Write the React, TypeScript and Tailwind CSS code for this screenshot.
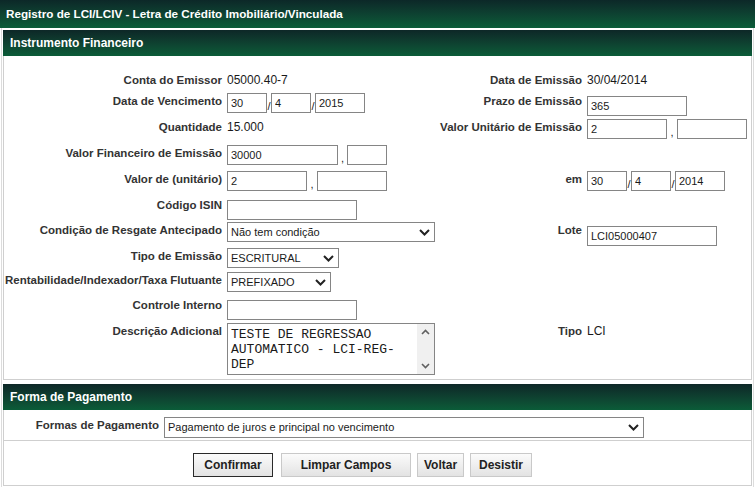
import clsx from 'clsx';

const Label = ({ children }: { children?: React.ReactNode }) => (
  <div className="whitespace-nowrap text-right text-[11.5px] font-bold leading-[16px] text-[#333]">
    {children}
  </div>
);

const Text = ({ children }: { children: React.ReactNode }) => (
  <div className="text-[12px] leading-[16px] text-[#1a1a1a]">{children}</div>
);

const Field = ({ className, value }: { className: string; value?: string }) => (
  <input
    readOnly
    defaultValue={value}
    className={clsx(
      'h-[20px] shrink-0 border border-[#858585] bg-white pl-[3px] text-[11px] text-[#1a1a1a] outline-none',
      className
    )}
  />
);

const Sep = ({ char, className }: { char: string; className: string }) => (
  <span className={clsx('flex h-[20px] shrink-0 items-end justify-center pb-[1px] text-[11px] leading-none text-[#222]', className)}>
    {char}
  </span>
);

const DateFields = ({ d, m, y }: { d: string; m: string; y: string }) => (
  <div className="flex">
    <Field className="w-[40px]" value={d} />
    <Sep char="/" className="w-[4px]" />
    <Field className="w-[40px]" value={m} />
    <Sep char="/" className="w-[4px]" />
    <Field className="w-[50px]" value={y} />
  </div>
);

const Chevron = () => (
  <svg width="11" height="7" viewBox="0 0 11 7" className="shrink-0">
    <polyline points="1,1 5.5,5.5 10,1" fill="none" stroke="#222" strokeWidth="2" />
  </svg>
);

const Select = ({ className, value }: { className: string; value: string }) => (
  <div
    className={clsx(
      'flex h-[20px] shrink-0 items-center justify-between border border-[#858585] bg-white pl-[3px] pr-[4px] text-[11px] text-[#1a1a1a]',
      className
    )}
  >
    <span className="whitespace-nowrap">{value}</span>
    <Chevron />
  </div>
);

const SectionHeader = ({ title }: { title: string }) => (
  <div className="h-[26px] bg-linear-to-b from-[#0d2727] to-[#0b5c38] pl-[7px] text-[12px] font-bold leading-[26px] text-white">
    {title}
  </div>
);

const Button = ({ label, className }: { label: string; className: string }) => (
  <div
    className={clsx(
      'flex h-[24px] items-center justify-center border bg-linear-to-b from-[#fbfbfb] to-[#e3e3e3] text-[12px] font-bold text-[#222]',
      className
    )}
  >
    {label}
  </div>
);

export default function App() {
  return (
    <div className="h-[487px] w-[755px] overflow-hidden bg-white font-['Liberation_Sans',Arial,sans-serif]">
      <div className="h-[28px] bg-linear-to-b from-[#0c2828] to-[#0b5d39] pl-[6px] text-[11.7px] font-bold leading-[28px] text-white">
        Registro de LCI/LCIV - Letra de Crédito Imobiliário/Vinculada
      </div>

      <div className="mx-[1px] h-[459px] border-x border-[#dcdcdc] px-[1px] pt-[2px]">
        <SectionHeader title="Instrumento Financeiro" />

        <div className="grid grid-cols-[218px_208px_142px_1fr] grid-rows-[21px_26px_26px_26px_26px_25px_26px_24px_25px_26px_52px] gap-x-[5px] border-x border-b border-[#cfcfcf] pb-[4px] pt-[16px]">
          <Label>Conta do Emissor</Label>
          <Text>05000.40-7</Text>
          <Label>Data de Emissão</Label>
          <Text>30/04/2014</Text>

          <Label>Data de Vencimento</Label>
          <DateFields d="30" m="4" y="2015" />
          <Label>Prazo de Emissão</Label>
          <div>
            <Field className="w-[100px]" value="365" />
          </div>

          <Label>Quantidade</Label>
          <Text>15.000</Text>
          <Label>Valor Unitário de Emissão</Label>
          <div className="flex">
            <Field className="w-[80px]" value="2" />
            <Sep char="," className="w-[10px]" />
            <Field className="w-[70px]" />
          </div>

          <Label>Valor Financeiro de Emissão</Label>
          <div className="flex">
            <Field className="w-[111px]" value="30000" />
            <Sep char="," className="w-[9px]" />
            <Field className="w-[40px]" />
          </div>
          <div />
          <div />

          <Label>Valor de (unitário)</Label>
          <div className="flex">
            <Field className="w-[80px]" value="2" />
            <Sep char="," className="w-[10px]" />
            <Field className="w-[70px]" />
          </div>
          <Label>em</Label>
          <DateFields d="30" m="4" y="2014" />

          <Label>Código ISIN</Label>
          <div>
            <Field className="w-[130px]" />
          </div>
          <div />
          <div />

          <Label>Condição de Resgate Antecipado</Label>
          <Select className="w-[208px]" value="Não tem condição" />
          <Label>Lote</Label>
          <div className="pt-[1px]">
            <Field className="w-[130px]" value="LCI05000407" />
          </div>

          <Label>Tipo de Emissão</Label>
          <Select className="w-[112px]" value="ESCRITURAL" />
          <div />
          <div />

          <Label>Rentabilidade/Indexador/Taxa Flutuante</Label>
          <Select className="w-[104px]" value="PREFIXADO" />
          <div />
          <div />

          <Label>Controle Interno</Label>
          <div>
            <Field className="w-[130px]" />
          </div>
          <div />
          <div />

          <Label>Descrição Adicional</Label>
          <div className="flex h-[52px] w-[208px] border border-[#858585] bg-white">
            <div className="flex-1 pl-[3px] pt-[3px] font-['Liberation_Mono','Courier_New',monospace] text-[13px] leading-[15px] text-[#1a1a1a]">
              TESTE DE REGRESSAO
              <br />
              AUTOMATICO - LCI-REG-
              <br />
              DEP
            </div>
            <div className="flex w-[17px] flex-col items-center justify-between bg-[#f0f0f0] py-[5px]">
              <svg width="9" height="6" viewBox="0 0 9 6">
                <polyline points="1,5 4.5,1.5 8,5" fill="none" stroke="#606060" strokeWidth="1.6" />
              </svg>
              <svg width="9" height="6" viewBox="0 0 9 6">
                <polyline points="1,1 4.5,4.5 8,1" fill="none" stroke="#606060" strokeWidth="1.6" />
              </svg>
            </div>
          </div>
          <Label>Tipo</Label>
          <Text>LCI</Text>
        </div>

        <div className="mt-[4px]">
          <SectionHeader title="Forma de Pagamento" />
        </div>

        <div className="flex h-[31px] gap-[5px] border-x border-b border-[#cfcfcf] pt-[7px]">
          <div className="w-[155px]">
            <Label>Formas de Pagamento</Label>
          </div>
          <Select className="h-[21px] w-[480px]" value="Pagamento de juros e principal no vencimento" />
        </div>

        <div className="flex h-[45px] border-x border-b border-[#cfcfcf] pl-[189px] pt-[12px]">
          <Button label="Confirmar" className="w-[80px] border-[#2a2a2a]" />
          <Button label="Limpar Campos" className="ml-[8px] w-[130px] border-[#c9c9c9]" />
          <Button label="Voltar" className="ml-[6px] w-[47px] border-[#c9c9c9]" />
          <Button label="Desistir" className="ml-[6px] w-[62px] border-[#c9c9c9]" />
        </div>
      </div>
    </div>
  );
}
